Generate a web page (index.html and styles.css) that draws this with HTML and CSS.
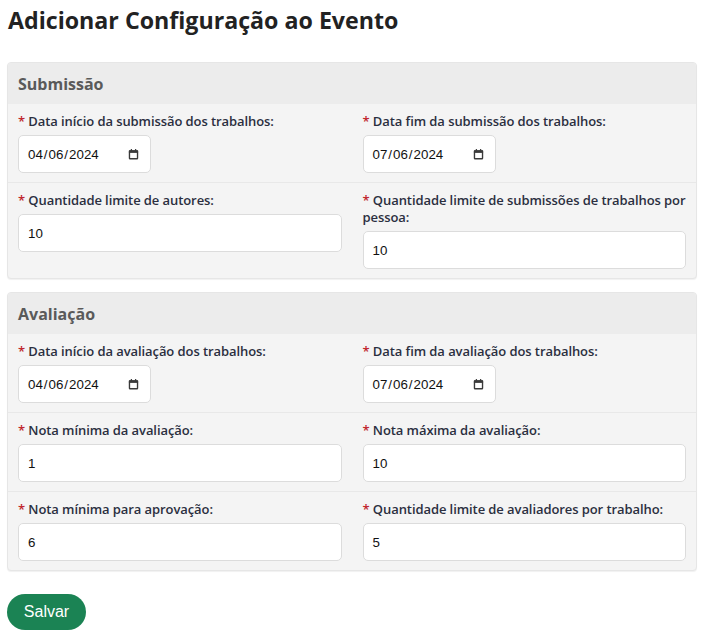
FILE: index.html
```html
<!DOCTYPE html>
<html lang="pt-BR">
<head>
<meta charset="utf-8">
<title>Adicionar Configuração ao Evento</title>
<link rel="stylesheet" href="styles.css">
</head>
<body>
<div class="page">
  <h1 class="title">Adicionar Configuração ao Evento</h1>

  <section class="card">
    <div class="card-header">Submissão</div>
    <div class="row">
      <div class="field">
        <label class="label"><span class="req">*</span> Data início da submissão dos trabalhos:</label>
        <div class="input date"><span class="dval">04<i>/</i>06<i>/</i>2024</span><svg class="cal" viewBox="0 0 12 12" width="11" height="12"><rect x="1.6" y="2.6" width="8.8" height="8.6" rx="0.6" fill="none" stroke="#3a3a3a" stroke-width="1.5"/><rect x="1" y="2" width="10" height="2.8" fill="#3a3a3a"/><rect x="3" y="0.6" width="1.4" height="2" fill="#3a3a3a"/><rect x="7.6" y="0.6" width="1.4" height="2" fill="#3a3a3a"/></svg></div>
      </div>
      <div class="field">
        <label class="label"><span class="req">*</span> Data fim da submissão dos trabalhos:</label>
        <div class="input date"><span class="dval">07<i>/</i>06<i>/</i>2024</span><svg class="cal" viewBox="0 0 12 12" width="11" height="12"><rect x="1.6" y="2.6" width="8.8" height="8.6" rx="0.6" fill="none" stroke="#3a3a3a" stroke-width="1.5"/><rect x="1" y="2" width="10" height="2.8" fill="#3a3a3a"/><rect x="3" y="0.6" width="1.4" height="2" fill="#3a3a3a"/><rect x="7.6" y="0.6" width="1.4" height="2" fill="#3a3a3a"/></svg></div>
      </div>
    </div>
    <div class="row">
      <div class="field">
        <label class="label"><span class="req">*</span> Quantidade limite de autores:</label>
        <div class="input">10</div>
      </div>
      <div class="field">
        <label class="label"><span class="req">*</span> Quantidade limite de submissões de trabalhos por pessoa:</label>
        <div class="input">10</div>
      </div>
    </div>
  </section>

  <section class="card">
    <div class="card-header">Avaliação</div>
    <div class="row">
      <div class="field">
        <label class="label"><span class="req">*</span> Data início da avaliação dos trabalhos:</label>
        <div class="input date"><span class="dval">04<i>/</i>06<i>/</i>2024</span><svg class="cal" viewBox="0 0 12 12" width="11" height="12"><rect x="1.6" y="2.6" width="8.8" height="8.6" rx="0.6" fill="none" stroke="#3a3a3a" stroke-width="1.5"/><rect x="1" y="2" width="10" height="2.8" fill="#3a3a3a"/><rect x="3" y="0.6" width="1.4" height="2" fill="#3a3a3a"/><rect x="7.6" y="0.6" width="1.4" height="2" fill="#3a3a3a"/></svg></div>
      </div>
      <div class="field">
        <label class="label"><span class="req">*</span> Data fim da avaliação dos trabalhos:</label>
        <div class="input date"><span class="dval">07<i>/</i>06<i>/</i>2024</span><svg class="cal" viewBox="0 0 12 12" width="11" height="12"><rect x="1.6" y="2.6" width="8.8" height="8.6" rx="0.6" fill="none" stroke="#3a3a3a" stroke-width="1.5"/><rect x="1" y="2" width="10" height="2.8" fill="#3a3a3a"/><rect x="3" y="0.6" width="1.4" height="2" fill="#3a3a3a"/><rect x="7.6" y="0.6" width="1.4" height="2" fill="#3a3a3a"/></svg></div>
      </div>
    </div>
    <div class="row">
      <div class="field">
        <label class="label"><span class="req">*</span> Nota mínima da avaliação:</label>
        <div class="input">1</div>
      </div>
      <div class="field">
        <label class="label"><span class="req">*</span> Nota máxima da avaliação:</label>
        <div class="input">10</div>
      </div>
    </div>
    <div class="row">
      <div class="field">
        <label class="label"><span class="req">*</span> Nota mínima para aprovação:</label>
        <div class="input">6</div>
      </div>
      <div class="field">
        <label class="label"><span class="req">*</span> Quantidade limite de avaliadores por trabalho:</label>
        <div class="input">5</div>
      </div>
    </div>
  </section>

  <button class="btn" type="button">Salvar</button>
</div>
</body>
</html>
```
FILE: styles.css
```css
* { box-sizing: border-box; }
html, body { margin: 0; padding: 0; background: #fff; }
body { font-family: "Open Sans", "Liberation Sans", sans-serif; color: #222; }
.page { padding: 4px 11px 10px 7px; }
.title {
  margin: 0 0 25px 1px;
  font-size: 23.2px;
  line-height: 33px;
  font-weight: 700;
  color: #222;
}
.card {
  background: #f4f4f4;
  border: 1px solid #e6e6e6;
  border-radius: 4px;
  box-shadow: 0 1px 1px rgba(0,0,0,0.06);
  margin-bottom: 13px;
  overflow: hidden;
}
.card-header {
  background: #ececec;
  height: 41px;
  padding: 0 10px;
  display: flex;
  align-items: center;
  font-size: 16px;
  font-weight: 700;
  color: #5a5a5a;
}
.row {
  display: grid;
  grid-template-columns: 1fr 1fr;
  column-gap: 21px;
  padding: 9px 10px 9px;
  border-top: 1px solid #e8e8e8;
}
.card-header + .row { border-top: 0; }
.field { display: flex; flex-direction: column; align-items: flex-start; }
.label {
  font-size: 13px;
  line-height: 17px;
  font-weight: 600;
  letter-spacing: -0.08px;
  color: #2b2f3f;
  margin-bottom: 5px;
}
.req { color: #c0262d; }
.input {
  width: 100%;
  height: 38px;
  background: #fff;
  border: 1px solid #dcdcdc;
  border-radius: 5px;
  padding: 0 9px;
  display: flex;
  align-items: center;
  font-family: "Liberation Sans", Arial, sans-serif;
  font-size: 13.33px;
  color: #111;
}
.input.date {
  width: 133px;
  justify-content: space-between;
  padding-right: 11px;
}
.dval i { font-style: normal; padding: 0 1px; }
.cal { display: block; }
.btn {
  margin-top: 10px;
  background: #1b8354;
  color: #fff;
  border: 0;
  border-radius: 18px;
  height: 36px;
  width: 79px;
  font-family: "Liberation Sans", Arial, sans-serif;
  font-size: 16px;
  cursor: pointer;
}
```
